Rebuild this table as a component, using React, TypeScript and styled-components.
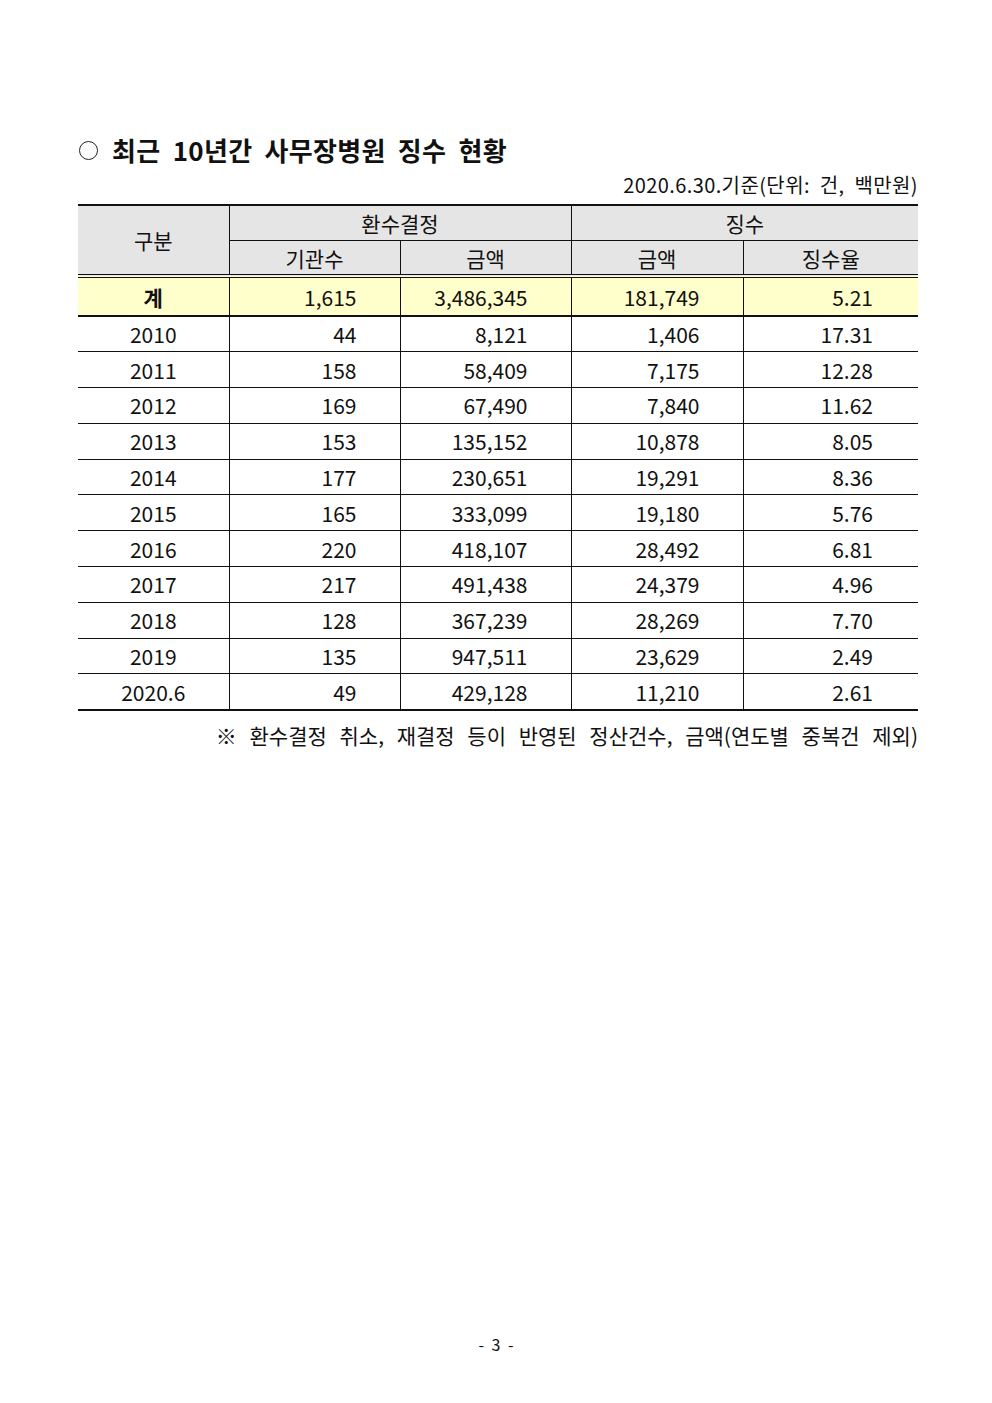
import styled, { createGlobalStyle } from 'styled-components';

const GlobalStyle = createGlobalStyle`
  html, body {
    margin: 0;
    padding: 0;
    background: #ffffff;
  }
  body {
    font-family: "Noto Sans CJK KR", "Noto Sans", sans-serif;
    color: #111111;
  }
`;

type Row = {
  label: string;
  count: string;
  amount: string;
  collected: string;
  rate: string;
};

const TOTAL: Row = { label: '계', count: '1,615', amount: '3,486,345', collected: '181,749', rate: '5.21' };

const ROWS: Row[] = [
  { label: '2010', count: '44', amount: '8,121', collected: '1,406', rate: '17.31' },
  { label: '2011', count: '158', amount: '58,409', collected: '7,175', rate: '12.28' },
  { label: '2012', count: '169', amount: '67,490', collected: '7,840', rate: '11.62' },
  { label: '2013', count: '153', amount: '135,152', collected: '10,878', rate: '8.05' },
  { label: '2014', count: '177', amount: '230,651', collected: '19,291', rate: '8.36' },
  { label: '2015', count: '165', amount: '333,099', collected: '19,180', rate: '5.76' },
  { label: '2016', count: '220', amount: '418,107', collected: '28,492', rate: '6.81' },
  { label: '2017', count: '217', amount: '491,438', collected: '24,379', rate: '4.96' },
  { label: '2018', count: '128', amount: '367,239', collected: '28,269', rate: '7.70' },
  { label: '2019', count: '135', amount: '947,511', collected: '23,629', rate: '2.49' },
  { label: '2020.6', count: '49', amount: '429,128', collected: '11,210', rate: '2.61' },
];

export default function App() {
  return (
    <Page>
      <GlobalStyle />
      <Title>
        <Bullet />
        <span>최근 10년간 사무장병원 징수 현황</span>
      </Title>
      <Unit>2020.6.30.기준(단위: 건, 백만원)</Unit>
      <Table>
        <colgroup>
          <col style={{ width: 151 }} />
          <col style={{ width: 171 }} />
          <col style={{ width: 171 }} />
          <col style={{ width: 172 }} />
          <col style={{ width: 175 }} />
        </colgroup>
        <thead>
          <tr>
            <HeadCell rowSpan={2} $last>
              구분
            </HeadCell>
            <HeadCell colSpan={2} $top>
              환수결정
            </HeadCell>
            <HeadCell colSpan={2} $top $edge>
              징수
            </HeadCell>
          </tr>
          <tr>
            <HeadCell $last>기관수</HeadCell>
            <HeadCell $last>금액</HeadCell>
            <HeadCell $last>금액</HeadCell>
            <HeadCell $last $edge>
              징수율
            </HeadCell>
          </tr>
        </thead>
        <tbody>
          <TotalRow>
            <LabelCell $bold>{TOTAL.label}</LabelCell>
            <NumCell>{TOTAL.count}</NumCell>
            <NumCell>{TOTAL.amount}</NumCell>
            <NumCell>{TOTAL.collected}</NumCell>
            <NumCell $edge>{TOTAL.rate}</NumCell>
          </TotalRow>
          {ROWS.map((r) => (
            <BodyRow key={r.label}>
              <LabelCell>{r.label}</LabelCell>
              <NumCell>{r.count}</NumCell>
              <NumCell>{r.amount}</NumCell>
              <NumCell>{r.collected}</NumCell>
              <NumCell $edge>{r.rate}</NumCell>
            </BodyRow>
          ))}
        </tbody>
      </Table>
      <Note>※ 환수결정 취소, 재결정 등이 반영된 정산건수, 금액(연도별 중복건 제외)</Note>
      <PageNumber>- 3 -</PageNumber>
    </Page>
  );
}

const Page = styled.div`
  width: 992px;
  height: 1403px;
  box-sizing: border-box;
  padding: 132px 74px 0 78px;
  position: relative;
`;

const Title = styled.h1`
  margin: 0;
  display: flex;
  align-items: center;
  gap: 14px;
  font-size: 26px;
  font-weight: 700;
  letter-spacing: 0.3px;
  word-spacing: 6px;
  line-height: 36px;
  color: #111;
`;

const Bullet = styled.span`
  width: 17px;
  height: 17px;
  border: 1.3px solid #222;
  border-radius: 50%;
  margin-left: 1px;
  flex-shrink: 0;
`;

const Unit = styled.div`
  margin: 2px 0 4px;
  text-align: right;
  font-size: 20px;
  line-height: 30px;
  letter-spacing: 0.4px;
  word-spacing: 5px;
`;

const Table = styled.table`
  width: 840px;
  border-collapse: collapse;
  table-layout: fixed;
  border-top: 2px solid #111;
  border-bottom: 2px solid #111;
  font-size: 21px;
`;

const HeadCell = styled.th<{ $last?: boolean; $edge?: boolean; $top?: boolean }>`
  background: #e5e5e5;
  font-weight: 400;
  height: ${(p) => (p.$top ? 34 : 33)}px;
  padding: 0;
  text-align: center;
  border-right: ${(p) => (p.$edge ? 'none' : '1px solid #111')};
  border-bottom: ${(p) => (p.$last ? '4px double #111' : '1px solid #111')};
  line-height: 28px;
`;

const TotalRow = styled.tr`
  background: #ffffcc;
  border-bottom: 2px solid #111;
  height: 40px;
`;

const BodyRow = styled.tr`
  height: 35.8px;
  border-bottom: 1px solid #111;
`;

const LabelCell = styled.td<{ $bold?: boolean }>`
  text-align: center;
  padding: 0;
  font-weight: ${(p) => (p.$bold ? 700 : 400)};
  border-right: 1px solid #111;
  line-height: 28px;
`;

const NumCell = styled.td<{ $edge?: boolean }>`
  text-align: right;
  padding: 0 ${(p) => (p.$edge ? 45 : 43)}px 0 0;
  border-right: ${(p) => (p.$edge ? 'none' : '1px solid #111')};
  line-height: 28px;
`;

const Note = styled.div`
  margin-top: 9px;
  text-align: right;
  font-size: 21px;
  line-height: 30px;
  word-spacing: 8px;
`;

const PageNumber = styled.div`
  position: absolute;
  left: 0;
  right: 0;
  top: 1332px;
  text-align: center;
  font-size: 16px;
  word-spacing: 4px;
`;
